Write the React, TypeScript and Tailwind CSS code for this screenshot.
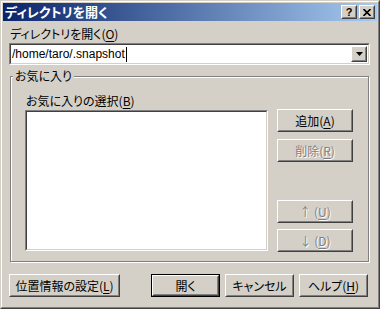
import React from "react";

const jp = "[font-family:'Noto_Sans_CJK_JP','Noto_Sans',sans-serif] [font-feature-settings:'palt'] text-[12px] leading-[14px]";

function Raised({ children, className = "" }: { children?: React.ReactNode; className?: string }) {
  return (
    <div className={"border border-t-white border-l-white border-r-[#404040] border-b-[#404040] " + className}>
      <div className="w-full h-full border border-t-[#d4d0c8] border-l-[#d4d0c8] border-r-[#808080] border-b-[#808080] flex items-center justify-center">
        {children}
      </div>
    </div>
  );
}

function Btn({
  children,
  className = "",
  disabled = false,
  def = false,
}: {
  children: React.ReactNode;
  className?: string;
  disabled?: boolean;
  def?: boolean;
}) {
  const txt = disabled ? "text-[#808080] [text-shadow:1px_1px_0_#ffffff]" : "text-black";
  const inner = (
    <Raised className="w-full h-full">
      <span className={jp + " " + txt + " whitespace-nowrap"}>{children}</span>
    </Raised>
  );
  if (def) {
    return <div className={"border border-black " + className}>{inner}</div>;
  }
  return <div className={className}>{inner}</div>;
}

function U({ children }: { children: React.ReactNode }) {
  return <span className="underline underline-offset-[2px] decoration-1">{children}</span>;
}

export default function App() {
  return (
    <div className="w-[380px] h-[309px] bg-[#d4d0c8] border border-t-[#d4d0c8] border-l-[#d4d0c8] border-r-[#404040] border-b-[#404040]">
      <div className="w-full h-full border border-t-white border-l-white border-r-[#808080] border-b-[#808080] p-px flex flex-col">
        {/* Title bar */}
        <div className="h-[18px] shrink-0 flex items-center bg-[linear-gradient(to_right,#0a246a,#a6caf0)] pl-[2px] pr-[2px]">
          <span className={jp + " text-white font-bold text-[13px]"}>ディレクトリを開く</span>
          <div className="ml-auto flex gap-[2px]">
            <Raised className="w-[16px] h-[14px] bg-[#d4d0c8]">
              <span className="text-[11px] leading-[11px] font-bold text-black [font-family:'Liberation_Sans',sans-serif]">?</span>
            </Raised>
            <Raised className="w-[16px] h-[14px] bg-[#d4d0c8]">
              <svg width="8" height="7" viewBox="0 0 8 7">
                <path d="M0.5 0 L7.5 7 M7.5 0 L0.5 7" stroke="black" strokeWidth="1.6" />
              </svg>
            </Raised>
          </div>
        </div>

        {/* Body */}
        <div className="flex-1 flex flex-col pl-[6px] pr-[7px]">
          <div className={jp + " mt-[6px] pl-[1px] text-black"}>
            ディレクトリを開く(<U>O</U>)
          </div>
          {/* Combo */}
          <div className="mt-[2px] h-[22px] border border-t-[#808080] border-l-[#808080] border-r-white border-b-white">
            <div className="w-full h-full border border-t-[#404040] border-l-[#404040] border-r-[#d4d0c8] border-b-[#d4d0c8] bg-white flex items-center">
              <span className="pl-[1px] text-[12px] leading-[14px] text-black [font-family:'Liberation_Sans',sans-serif]">/home/taro/.snapshot</span>
              <span className="inline-block w-px h-[15px] bg-black ml-[1px]" />
              <Raised className="ml-auto mr-px w-[16px] h-[16px] bg-[#d4d0c8]">
                <svg width="7" height="4" viewBox="0 0 7 4">
                  <polygon points="0,0 7,0 3.5,4" fill="black" />
                </svg>
              </Raised>
            </div>
          </div>

          {/* Group box */}
          <div className="relative mt-[11px] mx-px h-[186px] border border-[#808080] shadow-[inset_1px_1px_0_#ffffff,1px_1px_0_#ffffff]">
            <span className={jp + " absolute left-[2px] top-[-8px] bg-[#d4d0c8] px-[2px] text-black"}>お気に入り</span>
            <div className="flex pt-[17px] pl-[14px]">
              <div className="flex flex-col">
                <div className={jp + " pl-[1px] text-black"}>
                  お気に入りの選択(<U>B</U>)
                </div>
                <div className="mt-[2px] w-[243px] h-[141px] border border-t-[#808080] border-l-[#808080] border-r-white border-b-white">
                  <div className="w-full h-full border border-t-[#404040] border-l-[#404040] border-r-[#d4d0c8] border-b-[#d4d0c8] bg-white" />
                </div>
              </div>
              <div className="ml-[9px] mt-[15px] h-[143px] flex flex-col">
                <div className="flex flex-col gap-[7px]">
                  <Btn className="w-[76px] h-[23px]">
                    追加(<U>A</U>)
                  </Btn>
                  <Btn className="w-[76px] h-[23px]" disabled>
                    削除(<U>R</U>)
                  </Btn>
                </div>
                <div className="mt-auto flex flex-col gap-[6px]">
                  <Btn className="w-[76px] h-[23px]" disabled>
                    ↑ (<U>U</U>)
                  </Btn>
                  <Btn className="w-[76px] h-[23px]" disabled>
                    ↓ (<U>D</U>)
                  </Btn>
                </div>
              </div>
            </div>
          </div>

          {/* Bottom buttons */}
          <div className="mt-[12px] flex">
            <Btn className="w-[111px] h-[23px]">
              位置情報の設定(<U>L</U>)
            </Btn>
            <div className="ml-auto mr-[2px] flex gap-[5px]">
              <Btn className="w-[69px] h-[23px]" def>
                開く
              </Btn>
              <Btn className="w-[69px] h-[23px]">キャンセル</Btn>
              <Btn className="w-[69px] h-[23px]">
                ヘルプ(<U>H</U>)
              </Btn>
            </div>
          </div>
        </div>
      </div>
    </div>
  );
}
